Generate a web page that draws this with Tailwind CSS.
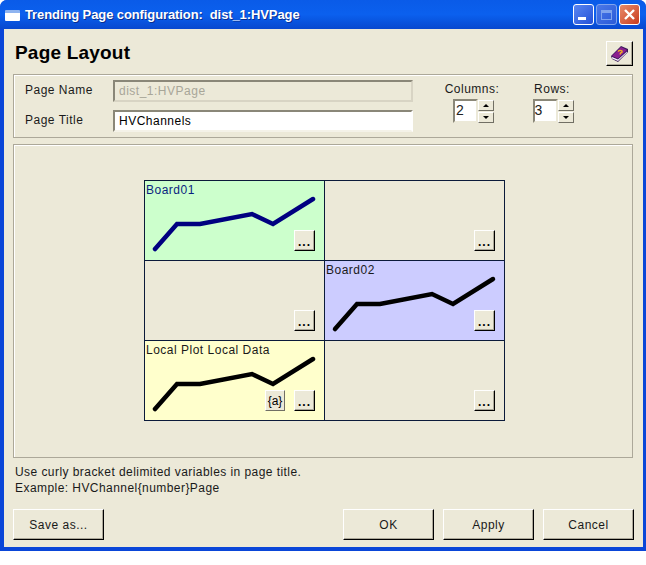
<!DOCTYPE html>
<html lang="en">
<head>
<meta charset="UTF-8">
<title>Trending Page configuration</title>
<script src="https://cdn.jsdelivr.net/npm/@tailwindcss/browser@4"></script>
</head>
<body class="bg-white overflow-hidden font-['Liberation_Sans',Arial,sans-serif] text-[12px] leading-[14px] tracking-[0.5px] text-[#1a1a1a]">
<div class="w-[646px] h-[551px] flex flex-col rounded-t-[7px] bg-[#0a46d8] overflow-hidden">

  <!-- title bar -->
  <div class="h-[29px] shrink-0 flex items-center pl-[5px] pr-[6px] bg-gradient-to-b from-[#0a5be8] via-[#0b60ee] to-[#0848cf]">
    <div class="w-[15px] h-[11px] bg-white border-t-[3px] border-[#8fb4f0] rounded-[1px] mt-[1px]"></div>
    <div class="ml-[5px] text-white font-bold text-[13px] tracking-[-0.1px] [text-shadow:1px_1px_0_#0a2f8f]">Trending Page configuration:&nbsp; dist_1:HVPage</div>
    <div class="ml-auto flex gap-[2px]">
      <div class="w-[21px] h-[21px] rounded-[3px] border border-white bg-gradient-to-br from-[#5a86f0] to-[#2450d8] flex items-end pl-[4px] pb-[4px]">
        <div class="w-[8px] h-[3px] bg-white"></div>
      </div>
      <div class="w-[21px] h-[21px] rounded-[3px] border border-[#7fa4ee] bg-gradient-to-br from-[#4a78e8] to-[#2a5ad8] flex items-center justify-center">
        <div class="w-[11px] h-[10px] border border-[#7fa4ee] border-t-[3px]"></div>
      </div>
      <div class="w-[21px] h-[21px] rounded-[3px] border border-white bg-gradient-to-br from-[#e88a6a] to-[#c8391a] flex items-center justify-center">
        <svg width="13" height="13" viewBox="0 0 13 13"><path d="M2 2 L11 11 M11 2 L2 11" stroke="#fff" stroke-width="2.4" fill="none"/></svg>
      </div>
    </div>
  </div>

  <!-- dialog body -->
  <div class="flex-1 mx-[3px] mb-[4px] ml-[4px] bg-[#ece9d8] flex flex-col pl-[9px] pr-[10px]">

    <div class="h-[45px] shrink-0 flex items-center justify-between">
      <div class="font-bold text-[19px] tracking-[0.2px] text-black pt-[3px] pl-[2px]">Page Layout</div>
      <button class="w-[27px] h-[25px] mt-[4px] bg-[#ece9d8] border-t border-l border-white border-r border-b border-r-black border-b-black shadow-[inset_-1px_-1px_0_#aca899] flex items-center justify-center">
        <svg width="20" height="18" viewBox="0 0 20 18">
          <path d="M1 11 L11 1 L18 4 L18 7 L8 17 L2 14 Z" fill="#3a1a5a"/>
          <path d="M2 11 L11 2 L17 5 L8 13.5 Z" fill="#8a1f8f"/>
          <path d="M2 12 L8 14.5 L17 6.5 L17 7.5 L8 16 L2 13.5 Z" fill="#f4eefa"/>
          <path d="M8 6.5 Q10 4.5 12 6 Q12.5 7.5 10.5 8 L10 9.5" stroke="#f0b020" stroke-width="1.4" fill="none"/>
        </svg>
      </button>
    </div>

    <!-- name / title group -->
    <div class="h-[64px] shrink-0 border border-[#aca899] shadow-[inset_1px_1px_0_#fff] flex pl-[11px] pt-[5px]">
      <div class="w-[88px] flex flex-col">
        <div class="h-[22px] flex items-center pb-[2px]">Page Name</div>
        <div class="h-[22px] mt-[8px] flex items-center pb-[2px]">Page Title</div>
      </div>
      <div class="w-[300px] flex flex-col">
        <div class="h-[22px] border-2 border-t-[#8a8778] border-l-[#8a8778] border-r-[#d8d4c4] border-b-[#d8d4c4] px-[4px] flex items-center text-[#a8a698]">dist_1:HVPage</div>
        <div class="h-[22px] mt-[8px] border-2 border-t-[#8a8778] border-l-[#8a8778] border-r-white border-b-[#f4f2e8] bg-white px-[4px] flex items-center text-black">HVChannels</div>
      </div>
      <div class="ml-[32px] w-[54px] flex flex-col items-center pt-[2px]">
        <div class="h-[14px] whitespace-nowrap">Columns:</div>
        <div class="flex mt-[3px] ml-[3px]">
          <div class="w-[25px] h-[24px] border-2 border-t-[#8a8778] border-l-[#8a8778] border-r-[#ece9d8] border-b-[#ece9d8] bg-white text-[14px] leading-[18px] text-[#222] pl-[1px]">2</div>
          <div class="w-[16px] flex flex-col gap-[1px] pt-[1px]">
            <div class="h-[11px] border-t border-l border-white border-r border-b border-r-[#716f64] border-b-[#716f64] flex items-center justify-center"><div class="border-x-[3px] border-x-transparent border-b-[3px] border-b-black"></div></div>
            <div class="h-[11px] border-t border-l border-white border-r border-b border-r-[#716f64] border-b-[#716f64] flex items-center justify-center"><div class="border-x-[3px] border-x-transparent border-t-[3px] border-t-black"></div></div>
          </div>
        </div>
      </div>
      <div class="ml-[26px] w-[54px] flex flex-col items-center pt-[2px]">
        <div class="h-[14px] whitespace-nowrap">Rows:</div>
        <div class="flex mt-[3px] ml-[2px]">
          <div class="w-[25px] h-[24px] border-2 border-t-[#8a8778] border-l-[#8a8778] border-r-[#ece9d8] border-b-[#ece9d8] bg-white text-[14px] leading-[18px] text-[#222]">3</div>
          <div class="w-[16px] flex flex-col gap-[1px] pt-[1px]">
            <div class="h-[11px] border-t border-l border-white border-r border-b border-r-[#716f64] border-b-[#716f64] flex items-center justify-center"><div class="border-x-[3px] border-x-transparent border-b-[3px] border-b-black"></div></div>
            <div class="h-[11px] border-t border-l border-white border-r border-b border-r-[#716f64] border-b-[#716f64] flex items-center justify-center"><div class="border-x-[3px] border-x-transparent border-t-[3px] border-t-black"></div></div>
          </div>
        </div>
      </div>
    </div>

    <!-- layout preview group -->
    <div class="h-[314px] mt-[6px] shrink-0 border border-[#aca899] shadow-[inset_1px_1px_0_#fff] flex items-start pt-[35px] pl-[130px]">
      <div class="w-[361px] h-[241px] border-l border-t border-[#0b1a3a] grid grid-cols-[180px_180px] grid-rows-[80px_80px_80px]">

        <div class="relative bg-[#ccffcc] border-r border-b border-[#0b1a3a] text-[#0a1f80] pl-[1px] pt-[2px]">Board01
          <svg class="absolute left-0 top-0" width="179" height="79"><polyline points="10,68 32,43 55,43 107,33 128,43 168,18" fill="none" stroke="#000080" stroke-width="4.5" stroke-linecap="round"/></svg>
          <button class="absolute left-[149px] top-[49px] w-[21px] h-[21px] bg-[#ece9d8] border-t border-l border-white border-r border-b border-r-black border-b-black shadow-[inset_-1px_-1px_0_#aca899] text-black leading-[12px] pt-[3px] font-bold tracking-[1px]">...</button>
        </div>

        <div class="relative border-r border-b border-[#0b1a3a]">
          <button class="absolute left-[149px] top-[49px] w-[21px] h-[21px] bg-[#ece9d8] border-t border-l border-white border-r border-b border-r-black border-b-black shadow-[inset_-1px_-1px_0_#aca899] text-black leading-[12px] pt-[3px] font-bold tracking-[1px]">...</button>
        </div>

        <div class="relative border-r border-b border-[#0b1a3a]">
          <button class="absolute left-[149px] top-[49px] w-[21px] h-[21px] bg-[#ece9d8] border-t border-l border-white border-r border-b border-r-black border-b-black shadow-[inset_-1px_-1px_0_#aca899] text-black leading-[12px] pt-[3px] font-bold tracking-[1px]">...</button>
        </div>

        <div class="relative bg-[#ccccff] border-r border-b border-[#0b1a3a] pl-[1px] pt-[2px]">Board02
          <svg class="absolute left-0 top-0" width="179" height="79"><polyline points="10,68 32,43 55,43 107,33 128,43 168,18" fill="none" stroke="#000" stroke-width="4.5" stroke-linecap="round"/></svg>
          <button class="absolute left-[149px] top-[49px] w-[21px] h-[21px] bg-[#ece9d8] border-t border-l border-white border-r border-b border-r-black border-b-black shadow-[inset_-1px_-1px_0_#aca899] text-black leading-[12px] pt-[3px] font-bold tracking-[1px]">...</button>
        </div>

        <div class="relative bg-[#ffffcc] border-r border-b border-[#0b1a3a] pl-[1px] pt-[2px] whitespace-nowrap">Local Plot Local Data
          <svg class="absolute left-0 top-0" width="179" height="79"><polyline points="10,68 32,43 55,43 107,33 128,43 168,18" fill="none" stroke="#000" stroke-width="4.5" stroke-linecap="round"/></svg>
          <button class="absolute left-[120px] top-[49px] w-[20px] h-[21px] bg-[#ece9d8] border-t border-l border-white border-r border-b border-r-[#716f64] border-b-[#716f64] text-black tracking-normal">{a}</button>
          <button class="absolute left-[149px] top-[49px] w-[21px] h-[21px] bg-[#ece9d8] border-t border-l border-white border-r border-b border-r-black border-b-black shadow-[inset_-1px_-1px_0_#aca899] text-black leading-[12px] pt-[3px] font-bold tracking-[1px]">...</button>
        </div>

        <div class="relative border-r border-b border-[#0b1a3a]">
          <button class="absolute left-[149px] top-[49px] w-[21px] h-[21px] bg-[#ece9d8] border-t border-l border-white border-r border-b border-r-black border-b-black shadow-[inset_-1px_-1px_0_#aca899] text-black leading-[12px] pt-[3px] font-bold tracking-[1px]">...</button>
        </div>
      </div>
    </div>

    <!-- hint -->
    <div class="mt-[6px] pl-[2px] leading-[16px] h-[32px] shrink-0 tracking-[0.44px]">
      <div>Use curly bracket delimited variables in page title.</div>
      <div>Example: HVChannel{number}Page</div>
    </div>

    <!-- buttons -->
    <div class="mt-[13px] flex">
      <button class="w-[91px] h-[31px] bg-[#ece9d8] border-t border-l border-white border-r border-b border-r-black border-b-black shadow-[inset_-1px_-1px_0_#aca899]">Save as...</button>
      <div class="ml-auto flex gap-[9px] mr-[-1px]">
        <button class="w-[91px] h-[31px] bg-[#ece9d8] border-t border-l border-white border-r border-b border-r-black border-b-black shadow-[inset_-1px_-1px_0_#aca899]">OK</button>
        <button class="w-[91px] h-[31px] bg-[#ece9d8] border-t border-l border-white border-r border-b border-r-black border-b-black shadow-[inset_-1px_-1px_0_#aca899]">Apply</button>
        <button class="w-[91px] h-[31px] bg-[#ece9d8] border-t border-l border-white border-r border-b border-r-black border-b-black shadow-[inset_-1px_-1px_0_#aca899]">Cancel</button>
      </div>
    </div>
  </div>
</div>
</body>
</html>
